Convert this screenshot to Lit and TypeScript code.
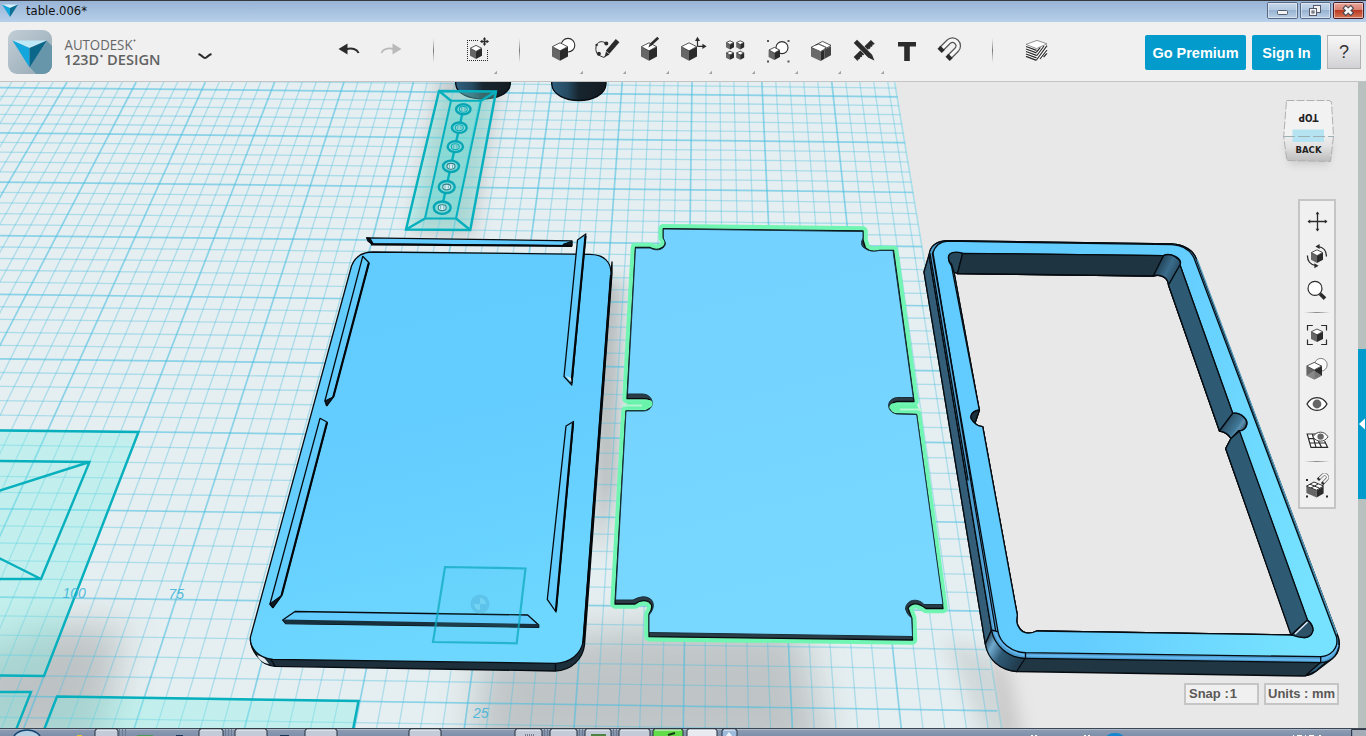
import { LitElement, html, svg, css } from "lit";
import { customElement, property } from "lit/decorators.js";

const DARK = "#2b2b2b";

/** Isometric box glyph: x/y is the top-left of its bounding box. */
const cube = (x: number, y: number, w: number, h: number) => {
  const m = x + w / 2, r = x + w, a = y + h * 0.23, b = y + h * 0.46, c = y + h * 0.77, d = y + h;
  return svg`
    <path d="M${x} ${a}L${m} ${b}V${d}L${x} ${c}Z" fill="#666"/>
    <path d="M${r} ${a}L${m} ${b}V${d}L${r} ${c}Z" fill="${DARK}"/>
    <path d="M${x + 0.4} ${a}L${m} ${y + 0.4}L${r - 0.4} ${a}L${m} ${b}Z" fill="#fff" stroke="${DARK}" stroke-width=".8" stroke-linejoin="round"/>`;
};

const arrows4 = (cx: number, cy: number, r: number, s: number) => svg`
  <path d="M${cx - r} ${cy}H${cx + r}M${cx} ${cy - r}V${cy + r}" stroke="${DARK}" stroke-width="1.3"/>
  <path fill="${DARK}" d="M${cx} ${cy - r - 1}l${s} ${s + 0.8}h${-2 * s}zM${cx} ${cy + r + 1}l${s} ${-s - 0.8}h${-2 * s}zM${cx - r - 1} ${cy}l${s + 0.8} ${s}v${-2 * s}zM${cx + r + 1} ${cy}l${-s - 0.8} ${s}v${-2 * s}z"/>`;

const magnet = (t: string) => svg`<g transform="${t}" fill="none">
  <path d="M5 13L12.5 5.5A5.6 5.6 0 0 1 20.5 13.5L13 21" stroke="#555" stroke-width="5.8"/>
  <path d="M5 13L12.5 5.5A5.6 5.6 0 0 1 20.5 13.5L13 21" stroke="#f6f6f6" stroke-width="3.4"/>
  <path d="M3.6 14.4L6.6 11.4M11.6 22.4L14.6 19.4" stroke="${DARK}" stroke-width="6"/></g>`;

const glyphs: Record<string, unknown> = {
  undo: svg`<path d="M11.5 27L20.5 21.6V32.4Z" fill="${DARK}"/><path d="M19 27.2C25 25.4 30 27 31.6 31" fill="none" stroke="${DARK}" stroke-width="2"/>`,
  redo: svg`<path d="M31.5 27L22.5 21.6V32.4Z" fill="#b9b9b9"/><path d="M24 27.2C18 25.4 13 27 11.4 31" fill="none" stroke="#b9b9b9" stroke-width="1.8"/>`,
  insert: svg`<path d="M11 18.500H23M11 38.500H32M11.500 20V38M31.500 28V38" fill="none" stroke="${DARK}" stroke-width="1" stroke-dasharray="1 1"/>${cube(14, 23, 12, 14)}${arrows4(28.5, 19.5, 3.6, 1.7)}`,
  primitives: svg`<circle cx="26" cy="23.200" r="6.800" fill="#fff" stroke="${DARK}" stroke-width="1.100"/>${cube(10, 20.4, 16, 18.4)}`,
  sketch: svg`<path d="M21.500 21.500C13.500 16 8.500 24 12 31.600C14 33.600 17.500 35 19 35.400L21.500 33" fill="none" stroke="${DARK}" stroke-width="1"/>
    <circle cx="21.300" cy="21.400" r="2" fill="${DARK}"/><circle cx="13.900" cy="31.800" r="2" fill="${DARK}"/><circle cx="11.600" cy="23" r="1.200" fill="${DARK}"/>
    <path d="M19.500 35.200L21 29.400L24.500 32.600Z" fill="${DARK}"/><path d="M22.600 30.200L32.600 18.600" stroke="${DARK}" stroke-width="4.800"/>`,
  construct: svg`${cube(13, 20.4, 16, 18.4)}<path d="M20.400 25.400L21.800 21.800L23.600 23.400Z" fill="${DARK}"/><path d="M22.600 22.800L30.200 15.800" stroke="${DARK}" stroke-width="2.600"/>`,
  modify: svg`${cube(10, 20.4, 16, 18.4)}<path d="M26.500 24.500V18M26.500 24.300H33" fill="none" stroke="${DARK}" stroke-width="1.200"/><path d="M26.500 14.800L29 19H24ZM35.600 24.300L31.400 21.700V26.900Z" fill="${DARK}"/>`,
  pattern: svg`${cube(12, 18.4, 8, 9)}${cube(22.2, 18.4, 8, 9)}${cube(12, 28.8, 8, 9)}${cube(22.2, 28.8, 8, 9)}`,
  grouping: svg`<circle cx="25" cy="25.600" r="6" fill="#fff" stroke="${DARK}" stroke-width="1.100"/>${cube(11.6, 25, 11.4, 13)}
    <path fill="#555" d="M10 18h2v2h-2zM30.500 18h2v2h-2zM10 38.400h2v2h-2zM30.500 38.400h2v2h-2z"/>`,
  combine: svg`<path d="M11 25.600L20.600 30V39L11 34.600Z" fill="#6a6a6a"/><path d="M20.600 30L24.600 27.600V36.800L20.600 39Z" fill="${DARK}"/><path d="M24.600 27.600L31 24.200V33.200L24.600 36.800Z" fill="#444"/>
    <path d="M11 25.400L22.500 19.400L31 23.400L20.600 29.600Z" fill="#fff" stroke="${DARK}" stroke-width=".8"/><path d="M15.500 23.200L18.500 22L26 25.400L24.600 27.200" stroke="${DARK}" stroke-width=".8" fill="none"/><path d="M18.500 21.800L26.500 25.400" stroke="#666" stroke-width=".8"/>`,
  measure: svg`<path d="M12.600 37L29.800 19.800" stroke="${DARK}" stroke-width="5.400"/><path d="M15 38.600L31.800 21.600" stroke="#f0f0f0" stroke-width="1.400" stroke-dasharray="1.200 1.800"/>
    <path d="M13.500 20.500L26 33" stroke="#f0f0f0" stroke-width="5.800"/><path d="M12.400 19.400L27 34" stroke="${DARK}" stroke-width="4.600"/><path d="M25 35.600L28.800 32L31.400 38.400Z" fill="${DARK}"/>`,
  text: svg`<path d="M12 20H30V24.600H23.800V39H18.200V24.600H12Z" fill="${DARK}"/>`,
  magnet: magnet("translate(7 14.4)"),
  material: svg`<path d="M11 23L21.500 26.800V38.800L11 34Z" fill="#fff"/><path d="M21.500 26.800L32 22.600V33L21.500 38.800Z" fill="#fff"/>
    <path d="M11 24.500L21.500 28.400M11 27L21.500 30.900M11 29.500L21.500 33.400M11 32L21.500 35.900M11 34.400L21.500 38.400" stroke="${DARK}" stroke-width="1.300"/>
    <path d="M21.500 30L25.400 25.400M21.500 34L29 24M21.500 38L32 23.600M25 37L32 28M28.600 35L32 31.400" stroke="${DARK}" stroke-width="1.200"/>
    <path d="M11 22.400L22 18.400L32 21.800L21.500 26.600Z" fill="#fff" stroke="#777" stroke-width=".8"/>`,
};

const navGlyphs: Record<string, unknown> = {
  pan: arrows4(17.5, 17.5, 9, 1.9),
  orbit: svg`${cube(11, 10.4, 12, 13.6)}<path d="M18 7.600C23.400 8 26.600 12 26.400 17.600M16 26.600C10.600 26 7.400 22 7.400 16.400" fill="none" stroke="${DARK}" stroke-width="1.300"/>
    <path d="M15.400 7.400L19.600 5V10ZM18.600 26.800L14.400 24.200V29.200Z" fill="${DARK}"/>`,
  zoom: svg`<circle cx="15" cy="15.400" r="7" fill="#fff" stroke="${DARK}" stroke-width="1.200"/><path d="M20 20.800L25 25.600" stroke="${DARK}" stroke-width="3.600"/>`,
  fit: svg`${cube(11, 10.6, 12, 13.4)}<path d="M7.500 12.400V7.500H12.800M21.200 7.500H26.500V12.400M7.500 21.600V26.500H12.800M21.200 26.500H26.500V21.600" fill="none" stroke="${DARK}" stroke-width="1.200"/>`,
  shading: svg`<circle cx="20.800" cy="12.800" r="6.400" fill="#fafafa" stroke="#666" stroke-width=".8"/>${cube(6.4, 10, 15.6, 17.4)}
    <path d="M6.400 23.400L14.200 18.600L22 23.400L14.200 27.400Z" fill="#999" opacity=".7"/>`,
  eye: svg`<path d="M7 17C11.500 8.400 22.500 8.400 27 17C22.500 25.600 11.500 25.600 7 17Z" fill="#fff" stroke="${DARK}" stroke-width="1.300"/><circle cx="17" cy="17" r="4.400" fill="#666"/>`,
  gridEye: svg`<path d="M7.400 12H24.600L27.400 25.400H11Z" fill="#fff"/><path d="M18 12H7.200L11 25.400H27.600L24.600 19M8.600 16.600H15M9.800 21H26M12.400 12L16 25.400M18.400 19L21.600 25.400" fill="none" stroke="${DARK}" stroke-width="1.200"/>
    <path d="M13 14.800C16.500 8.600 24.500 8.600 28 14.800C24.500 20.600 16.500 20.600 13 14.800Z" fill="#fff" stroke="#444" stroke-width="1"/><circle cx="20.600" cy="14.600" r="3.200" fill="#666"/>`,
  snap: svg`<path d="M6.400 17.600L16.600 21.400V28.600L6.400 24Z" fill="#666"/><path d="M16.600 21.400L23.600 17.400V24.400L16.600 28.600Z" fill="${DARK}"/>
    <path d="M6.400 17.200L14 13L23.600 17L16.600 21.200Z" fill="#fff" stroke="${DARK}" stroke-width="1"/><path d="M10 15.200L19.600 19.200M11 19L18 15" stroke="${DARK}" stroke-width="1"/>
    ${magnet("translate(16 3.4) scale(.52)")}<path fill="${DARK}" d="M6 10h2v2H6zM6 26.400h2v2H6zM26 26.400h2v2h-2z"/>`,
};

const SLOTS = ["undo", "redo", "|", "insert*", "|", "primitives*", "sketch*", "construct*", "modify*", "pattern*", "grouping*", "combine*", "measure*", "text", "magnet", "|", "material"];

@customElement("tool-slot")
class ToolSlot extends LitElement {
  @property() name = "";
  static styles = css`
    :host { display: block; width: 43px; height: 59px; }
    svg { display: block; }
  `;
  render() {
    if (this.name === "|")
      return html`<svg width="43" height="59"><defs><linearGradient id="s" x1="0" x2="0" y1="0" y2="1"><stop offset="0" stop-color="#999" stop-opacity="0"/><stop offset=".5" stop-color="#777"/><stop offset="1" stop-color="#999" stop-opacity="0"/></linearGradient></defs><rect x="20" y="16" width="1" height="25" fill="url(#s)"/></svg>`;
    const menu = this.name.endsWith("*");
    return html`<svg width="43" height="59">${glyphs[this.name.replace("*", "")]}
      ${menu ? svg`<path d="M41 48.800V52H37.800Z" fill="#a2a2a2"/>` : ""}</svg>`;
  }
}

@customElement("nav-bar")
class NavBar extends LitElement {
  static styles = css`
    :host { display: flex; flex-direction: column; box-sizing: border-box; width: 38px; height: 310px; padding: 3px 0; background: #f0f0f0; border: 2px solid #c5c5c5; }
    svg { display: block; flex: none; }
    .rule { height: 1px; margin: 4px 4px 5px; background: linear-gradient(90deg, transparent, #888, transparent); flex: none; }
    .last { margin-top: 2px; }
  `;
  private icon(n: string, c = "", h = 34.5) {
    return html`<svg class=${c} width="34" height=${h} viewBox="0 0 34 ${h}">${navGlyphs[n]}</svg>`;
  }
  render() {
    return html`${["pan", "orbit", "zoom"].map((n) => this.icon(n))}
      <div class="rule"></div>
      ${["fit", "shading", "eye", "gridEye"].map((n) => this.icon(n, "", 34.9))}
      <div class="rule"></div>${this.icon("snap", "last")}`;
  }
}

/* ---- workplane grid in perspective ---- */
const TOP = 82, BOTTOM = 728, EDGE = 2.91;
const columnTop = (k: number) => 692 + 69.8 * k + 0.04 * k * k;
const columnBottom = (k: number) => 683.3 + 109.2 * k - 0.12 * k * k;
const rowY = (j: number) => -1011.7 + 27767 / (25.26 - j);

const gridLines = () => {
  const out: unknown[] = [];
  for (let i = -70; i <= 14; i++) {
    const k = i / 5, major = i % 5 === 0;
    out.push(svg`<line class=${major ? "major" : "minor"} x1=${columnTop(k)} y1=${TOP} x2=${columnBottom(k)} y2=${BOTTOM}></line>`);
  }
  for (let i = -2; i <= 51; i++) {
    const j = i / 5, y = rowY(j), major = i % 5 === 0;
    out.push(svg`<line class=${major ? "major" : "minor"} x1="0" y1=${y} x2="1010" y2=${y + 1010 * (0.0103 + 0.0005 * j)}></line>`);
  }
  return out;
};

const RINGS = [[463.3, 109.3, 7.2, 5], [459.3, 127.7, 7.4, 5.2], [455.3, 146.7, 7.6, 5.4], [451, 166.3, 8, 5.7], [446.7, 187, 8, 6], [442.2, 207.7, 8.4, 6.2]];

/* Visible opening of the frame, and the outline of the notched plate. */
const OPENING = "M957.500 273.500L1153.500 276C1162 274 1168 278 1168.500 285L1219.500 431Q1227 432 1231 438.500L1225.700 448.500L1291.500 635L1036.700 631C1031 634 1024 634 1020 629C1016 624 1016.500 620 1017.300 615L982.700 426.700Q977 426 975 423L979.300 410L954 272Z";
const PLATE = "M663.300 228.700L863 231V240L865.500 248Q871 253 879 250.500H893.500L914 401.500H897C887 403 888 414 897 414L916.500 414.500L943 608.500H926Q914 599.500 908 608L911.700 618L912.500 640L649 636.700V614Q654.500 606 649 602Q642 598.500 635 604H615L626 411H645C654 408 654 399 645 398.700H627L635.500 247.500H650C658 252 667 247 665 240L663.300 238Z";

@customElement("model-scene")
class ModelScene extends LitElement {
  static styles = css`
    :host { display: block; }
    svg { display: block; }
    .major { stroke: #49bde0; stroke-opacity: .58; stroke-width: 1.7; }
    .minor { stroke: #49bde0; stroke-opacity: .37; stroke-width: 1.3; }
    .sketch { fill: rgba(125, 243, 232, .33); stroke: #08b0be; stroke-width: 2.4; }
    .wire { fill: none; stroke: #08b0be; stroke-width: 2.4; }
    .e { stroke: #050b10; stroke-width: 1.3; stroke-linejoin: round; }
    .line { fill: none; stroke: #050b10; stroke-width: 1.3; stroke-linecap: round; }
    .axis { font: italic 14px "Liberation Sans", sans-serif; fill: #3fb5d8; fill-opacity: .9; }
  `;
  render() {
    return html`<svg width="1358" height="646" viewBox="0 82 1358 646">
      <defs>
        <clipPath id="plane"><path d="M0 82H${columnTop(EDGE)}L${columnBottom(EDGE)} 728H0Z"/></clipPath>
        <filter id="b1" x="-50%" y="-50%" width="200%" height="200%"><feGaussianBlur stdDeviation="19"/></filter>
        <filter id="b2" x="-50%" y="-50%" width="200%" height="200%"><feGaussianBlur stdDeviation="9"/></filter>
        <linearGradient id="cyl"><stop offset="0" stop-color="#30607f"/><stop offset=".3" stop-color="#254a61"/><stop offset=".5" stop-color="#17252f"/><stop offset="1" stop-color="#141b21"/></linearGradient>
        <linearGradient id="p1" x1="0" y1="0" x2=".2" y2="1"><stop offset="0" stop-color="#62cbff"/><stop offset=".6" stop-color="#65ceff"/><stop offset="1" stop-color="#6dd7ff"/></linearGradient>
        <linearGradient id="p2" x1="0" y1="0" x2=".2" y2="1"><stop offset="0" stop-color="#72d1ff"/><stop offset="1" stop-color="#79d8ff"/></linearGradient>
        <linearGradient id="fr" gradientUnits="userSpaceOnUse" x1="930" y1="400" x2="1330" y2="500"><stop offset="0" stop-color="#62cbff"/><stop offset=".5" stop-color="#64cdff"/><stop offset="1" stop-color="#76e2ff"/></linearGradient>
        <linearGradient id="co" gradientUnits="userSpaceOnUse" x1="985" y1="640" x2="1022" y2="660"><stop offset="0" stop-color="#29465a"/><stop offset=".22" stop-color="#6fa9cd"/><stop offset=".5" stop-color="#2f5a75"/><stop offset="1" stop-color="#203a4b"/></linearGradient>
        <linearGradient id="nt" gradientUnits="userSpaceOnUse" x1="1224" y1="424" x2="1242" y2="436"><stop offset="0" stop-color="#2c5168"/><stop offset=".55" stop-color="#3f7797"/><stop offset=".68" stop-color="#5b91b0"/><stop offset="1" stop-color="#213e50"/></linearGradient>
        <linearGradient id="nc" gradientUnits="userSpaceOnUse" x1="1158" y1="262" x2="1180" y2="273"><stop offset="0" stop-color="#1f3c4f"/><stop offset=".5" stop-color="#3a6c8b"/><stop offset="1" stop-color="#254458"/></linearGradient>
      </defs>
      <rect y="82" width="1358" height="646" fill="#e8e8e8"/>
      <path d="M985 650L1008 670L1024 745L995 740Z" fill="#999" opacity=".4" filter="url(#b2)"/>
      <g clip-path="url(#plane)">
        <rect y="82" width="1010" height="646" fill="#e5eef0"/>
        <path d="M440 75H500L472 236L412 232Z" fill="#777" opacity=".32" filter="url(#b2)"/>
        <path d="M590 280H622L618 480L598 560Z" fill="#888" opacity=".5" filter="url(#b2)"/>
        <path d="M40 625H122L105 750H-40V660Z" fill="#888" opacity=".42" filter="url(#b1)"/>
        <path d="M485 645L650 625H800L830 760H470Z" fill="#888" opacity=".4" filter="url(#b1)"/>
        <path d="M945 640L1000 655L1030 740H985Z" fill="#999" opacity=".26" filter="url(#b2)"/>
        ${gridLines()}
      </g>
      <path d="M894.600 82L1001.700 728" stroke="#76cfe6" stroke-opacity=".5" stroke-width="1.600"/>

      <path d="M455.700 80V84C457 104 509 104 510.300 84V80Z" fill="url(#cyl)" class="e"/>
      <path d="M551.700 80V84C553 106 605 106 606 84V80Z" fill="url(#cyl)" class="e"/>

      <path class="sketch" d="M439 91L496 91.500L470.300 230L406 229.500Z"/>
      <path d="M451 100.700H481L456 218.500H425Z" fill="rgba(100,222,214,.45)" stroke="#08b0be" stroke-width="2"/>
      <path class="wire" d="M439 91L451 100.700M496 91.500L481 100.700M470.300 230L456 218.500M406 229.500L425 218.500M463.300 109L442 207"/>
      ${RINGS.map(([x, y, a, b], i) => svg`<ellipse cx=${x} cy=${y} rx=${a} ry=${b} fill="#84dcd9" stroke="#08a5b4" stroke-width="2.400"/>
        <ellipse cx=${x} cy=${y} rx="4" ry="2.900" fill=${i > 2 ? "#d8eef0" : "#8fd7d6"} stroke=${i > 2 ? "#357f8b" : "#11acb9"} stroke-width="1.100"/><path d="M${x - 1.6} ${y - 1.6}v3.200M${x + 1.6} ${y - 1.6}v3.200" stroke="#39aab4" stroke-width=".8"/>`)}

      <path class="sketch" d="M-5 430.500L138.500 432L44 676L-5 675.500Z"/>
      <path class="wire" d="M-5 461L89.500 462L41 579H-5M89.500 462L-5 492M41 579L-5 556"/>
      <path class="sketch" d="M-5 692H31L12 740H-5Z"/>
      <path class="sketch" d="M57 696.500L358.500 701L351 740H40Z"/>
      <text class="axis" x="62.500" y="597.500">100</text><text class="axis" x="168.500" y="598.500">75</text>
      <text class="axis" x="473" y="718">25</text>

      <path d="M250.400 640C251 650 256 655 259 658C263 664 268 666 275 666.300L555 671C572 671 583 658 584.500 645L612 273V262L580 640L555 660Z" fill="#1c2f3b" class="e"/>
      <path d="M257 655L264 657.500L269 664C263 663 259 660 257 655Z" fill="#dfe9ee"/>
      <path d="M373 252L590 254.300C604 254.500 611 262 611 273L583.200 641C581 654 570 663 555 663.300L273 659.300C258 658 250 648 250.300 637.500L351.500 266C355 257 362 252 373 252Z" fill="url(#p1)" class="e"/>
      <path class="line" d="M271 659.500L275 666M555.500 664V670.500"/>
      <g class="e" fill="#63ccff">
        <path d="M366.700 237.800L572 240.800V245.800L371.500 243.800L368 241Z"/>
        <path d="M362.700 256.300L369 262.700L333.300 396.700L326.500 405.500L325 400.500Z"/>
        <path d="M320 418.300L327.300 422.300L281.700 595L272.700 607.500L270 604Z"/>
        <path d="M295 611.500L527.700 615L538.700 625V627.300L286 623.700L282.700 620Z"/>
        <path d="M566 426L573.500 421.500L556 612L547.300 599.300Z"/>
        <path d="M577.500 240L585.800 234L571.800 385L564 376.500Z"/>
      </g>
      <path d="M283 619.500L538.500 624V627.500L286 623.700Z" fill="#17303e"/>
      <path d="M325 401L333.300 397L327 405.500ZM270 604L281.700 595.500L273 607.500ZM564 244L571.500 241.500V245.500L563 245.300ZM367 238L371.500 243.500L373 243.500L370 238.500Z" fill="#101d26" class="e"/>
      <path d="M371 244.300L572 246M368.800 263L333.300 397M327 422.500L281.700 595M573 423L555.900 611M585.500 236L571.500 383M611 275L583.300 643" fill="none" stroke="#03070a" stroke-width="2.200"/>
      <path d="M566 376L571.500 382L571 378Z" fill="#dceaf0"/>

      <g opacity=".72"><path d="M445 567L525.500 568.500L516.700 643.300L433 642Z" fill="rgba(70,200,222,.12)" stroke="#0ba9bd" stroke-width="2.200"/></g>
      <circle cx="480" cy="604" r="9.500" fill="#59bae0" opacity=".65"/><path d="M480 604V598A6 6 0 0 1 486 604ZM480 604V610A6 6 0 0 1 474 604Z" fill="#72d3f3"/>

      <path d=${PLATE} fill="#24323b" stroke="#70f5b2" stroke-width="9.500" stroke-linejoin="round"/>
      <path d=${PLATE} fill="#2b3c47" class="e"/>
      <path d="M663.300 229L863 231.500L863 238Q860 244 863 247Q870 253 879 250.500H893L913.300 397.500H899C886 397 885 412 897 414L916.700 414.500L943 604.500H924C917 597 906 600 905.500 609Q907 615 911.700 618L912.500 636.500L649 632.500V615C655 608 654 602 650.500 599Q644 594 633 600H615.500L626 411H643C656 411 655 394 642 394H627.500L635.500 248H650C658 252 665 249 665.500 243L663.300 238Z" fill="url(#p2)" stroke="#17303a" stroke-width="1"/>
      <path d="M630 405H645Q649 405 649 403.500M893 407Q895 408.500 899 408.500H915" fill="none" stroke="#69f3aa" stroke-width="7" stroke-linecap="round"/>
      <path d="M622 405.500H642M900 409.500H922" stroke="#b4f5d3" stroke-width="1.800"/>

      <path fill-rule="evenodd" d="M924 272L930 252C932 245 938 241 948 240.700L1172 244C1184 245 1192 250 1195.500 257L1338.500 638C1341 648 1337 655 1332 659L1315 672Q1310 676 1303 676L1016.700 671.500C1000 670 988 658 985.300 644Z${OPENING}" fill="#213643" class="e"/>
      <path d="M924 272L929 255L991.500 630L985.300 644Z" fill="#345d77" class="e"/>
      <path d="M985.300 644L991.500 630C996 645 1008 656 1025 658.500L1016.700 671.500C1000 670 988 660 985.300 644Z" fill="url(#co)" class="e"/>
      <path d="M1320.500 662.500L1337 653L1316 671L1305 676Z" fill="#32637f" class="e"/>
      <path fill-rule="evenodd" d="M929 255C930 246 937 241 948 240.700L1172 244C1184 245 1192 250 1195.500 257L1338.500 638C1341 654 1332 662 1320.500 662.600L1025.500 658.300C1008 658 994 645 991.500 630Z${OPENING}" fill="#4f9fd0" class="e"/>
      <path d="M936 258L995 632Q1001 650 1025 655.500L1320 660Q1334 657 1338 645" fill="none" stroke="#65b8f1" stroke-width="1.800"/>
      <path fill-rule="evenodd" d="M932.500 254C935 245 940 241.500 948 241.200L1172 244.600C1182 245 1190 250 1194 258L1336.500 637C1339 649 1330 656 1320.700 656.700L1025.700 652.700C1010 652 1000 642 998 631.500ZM948.500 258C948 253 955 251.500 962.700 253.300L1163 255.700C1170 252 1183 258 1180 265L1232.700 413.300C1240 412 1250 419 1246 427Q1243 431 1239 430.700L1307.300 620Q1313 624 1313 630C1312 637 1305 639 1300 636.500L1291.700 635L1036.700 631C1031 634 1024 634 1020 629C1016 624 1016.500 620 1017.300 615L982.700 426.700Q975 426 971 418Q971 411 979.300 410L951.500 266Q948.500 262 948.500 258Z" fill="url(#fr)" class="e"/>
      <path d="M948.500 258C948 252 955 251 962.700 253.300L957.500 273.500L954 272L951.500 264Q948.500 262 948.500 258Z" fill="#27485b" class="e"/>
      <path d="M962.700 253.300L1163.500 255.700L1153.500 276L957.500 273.500Z" fill="#1e3441" class="e"/>
      <path d="M1163.500 255.700C1172 252 1182 260 1180 265L1168.500 285C1168 278 1162 274 1153.500 275.500Z" fill="url(#nc)" class="e"/>
      <path d="M1180 265L1232.700 413.300L1219.500 431L1168.500 285Z" fill="#2e5a73" class="e"/>
      <path d="M1232.700 413.300C1240 412 1250 420 1245.500 427Q1243 431 1238.500 430.700L1231 438.500Q1227 432 1219.500 431Z" fill="url(#nt)" class="e"/>
      <path d="M1239.500 431L1307.500 620L1291 635L1225.700 448.500L1231 438.500Z" fill="#2e5a73" class="e"/>
      <path d="M1307.500 620Q1313 625 1313 630C1312 637 1305 640 1292 635Z" fill="#2d5267" class="e"/><path d="M1307.500 622L1295 634" stroke="#d8eafa" stroke-width="1.600"/>
      <path d="M979.500 410L975 423Q970 419 971 416Q972 411 979.500 410Z" fill="#1b303d" class="e"/>
      <path class="line" d="M933 253L995.500 630M930 253.500L968 480M991.500 630L997.500 631.500M1025.500 653L1025.500 658.500M1320.700 657V662.500"/>
      <path d="M1197 259L1337 634" stroke="#579fc0" stroke-width="1.300"/>
    </svg>`;
  }
}

@customElement("view-cube")
class ViewCube extends LitElement {
  static styles = css`
    :host { display: block; } svg { display: block; overflow: visible; }
    text { font: bold 10px "DejaVu Sans", sans-serif; fill: #222; text-anchor: middle; }
    .back { font-size: 8px; }
  `;
  render() {
    return html`<svg width="52" height="64" viewBox="0 0 52 64">
      <defs><linearGradient id="g" x1="0" x2="0" y1="0" y2="1"><stop offset="0" stop-color="#ededed"/><stop offset=".4" stop-color="#e2e2e2"/><stop offset="1" stop-color="#bcbcbc"/></linearGradient>
      <filter id="f" x="-30%" y="-30%" width="160%" height="190%"><feGaussianBlur stdDeviation="4"/></filter></defs>
      <path d="M3 44H49L45 65H7Z" fill="#999" opacity=".4" filter="url(#f)"/>
      <path d="M3.500 1.500H46L48.500 3L50.500 37.500H.7Z" fill="#f2f2f2"/><path d="M.7 37.500H50.500L47.500 62.500L4 61.500Z" fill="url(#g)"/>
      <path d="M3.500 1.500H46L48.500 3L50.500 37.500L47.500 62.500L4 61.500L.7 37.500Z" fill="none" stroke="#b0b0b0" stroke-width="1" stroke-dasharray="8 2"/>
      <rect x="9.500" y="30.500" width="31.500" height="12.500" fill="#b5e3f1"/><path d="M0 37.500H51" stroke="#9fb0b5" stroke-width="1" stroke-dasharray="12 3"/>
      <text transform="translate(25.500 15) rotate(180)" textLength="20" lengthAdjust="spacingAndGlyphs">TOP</text>
      <text class="back" x="25.500" y="53.500" textLength="26" lengthAdjust="spacingAndGlyphs">BACK</text>
    </svg>`;
  }
}

const TASKS: [number, number, string][] = [[95, 23, ""], [199, 24, ""], [235, 32, ""], [305, 32, ""], [409, 32, ""], [515, 27, ""], [550, 27, ""], [585, 26, ""], [619, 31, ""], [653, 30, "green"], [687, 30, "white"], [722, 15, "blue"]];

@customElement("task-bar")
class TaskBar extends LitElement {
  static styles = css`:host, svg { display: block; }`;
  render() {
    const fills: Record<string, string> = { "": "#c3cbd8", green: "#62dc49", white: "#e7eaf0", blue: "#9fbbdc" };
    return html`<svg width="1366" height="8"><defs><linearGradient id="t" x1="0" x2="0" y1="0" y2="1"><stop offset="0" stop-color="#929fb4"/><stop offset="1" stop-color="#7d8faa"/></linearGradient></defs>
      <rect width="1366" height="8" fill="url(#t)"/><rect width="1366" height="1" fill="#3c4654"/><rect y="1" width="1366" height="1" fill="#a9b9ca"/>
      <ellipse cx="27" cy="12" rx="14" ry="10" fill="#b5cfe2" stroke="#164571" stroke-width="1.500"/>
      ${TASKS.map(([x, w, c]) => svg`<rect x=${x} y="1" width=${w} height="12" rx="2" fill=${fills[c]} stroke="#26303d" stroke-width="1"/><path d="M${x + 2} 2H${x + w - 2}" stroke="#f4f7fa"/>`)}
      <path d="M119.500 1V8M122.500 1V8M125.500 1V8M225.500 1V8M228.500 1V8M231.500 1V8M544.500 1V8M547.500 1V8M579.500 1V8M582.500 1V8M613.500 1V8M616.500 1V8" stroke="#6c7b92"/>
      <path d="M137 7.500H153" stroke="#4d9a58"/><path d="M77 7.500H82" stroke="#ddc62c"/><path d="M176 7.500H183M280 7.500H289" stroke="#1a3557"/><path d="M591 7H606" stroke="#4e8543" stroke-width="2"/><path d="M668 7L675 5" stroke="#163b14" stroke-width="2"/>
      <path d="M525 7H534" stroke="#778" stroke-dasharray="1 1" stroke-width="2"/><path d="M729 4L732 8H726Z" fill="#edf5ff"/>
      <path d="M1031 7.500h2M1035 7.500h2M1084 7.500h2M1088 7.500h2M1293 7.500h1M1297 7.500h5M1305 7.500h1M1309 7.500h5M1319 7.500h2" stroke="#fff"/>
      <ellipse cx="1115" cy="10" rx="9" ry="5" fill="#1687cf"/><path d="M1351.500 8V1.500H1366" fill="none" stroke="#303945"/><rect x="1353" y="2" width="13" height="6" fill="#a4acb7"/></svg>`;
  }
}

@customElement("app-root")
class AppRoot extends LitElement {
  static styles = css`
    :host { display: flex; flex-direction: column; width: 1366px; height: 736px; overflow: hidden; font-family: "Liberation Sans", Arial, sans-serif; background: #e8e8e8; }
    .title { display: flex; align-items: center; box-sizing: border-box; height: 22px; padding: 0 2px 2px 1px; border-top: 1px solid #36383e; background: linear-gradient(#98b4d6, #b7d0ea); flex: none; }
    .title svg { display: block; }
    .caption { width: 70px; }
    .windows { display: flex; gap: 2px; margin-left: auto; }
    .bar { display: flex; box-sizing: border-box; height: 60px; background: #f0f0f0; border-bottom: 1px solid #c3c3c3; flex: none; }
    .brand { width: 327px; flex: none; }
    .actions { display: flex; gap: 6px; margin: 13px 5px 0 auto; }
    .btn { display: flex; align-items: center; justify-content: center; height: 35px; border-radius: 2px; background: #029bcb; color: #fff; font-weight: bold; font-size: 14.5px; }
    .premium { width: 101px; } .sign { width: 69px; }
    .help { display: flex; align-items: center; justify-content: center; box-sizing: border-box; width: 34px; height: 34px; border: 1px solid #b1b1b1; background: linear-gradient(#f7f7f7, #d2d2d6); color: #333; font-size: 18px; }
    .view { display: flex; position: relative; height: 646px; flex: none; }
    .rail { width: 8px; background: #b8c1bf; padding-top: 267px; box-sizing: border-box; }
    .tab { height: 150px; background: #029bcb; display: flex; align-items: center; }
    .tab svg { display: block; }
    view-cube { position: absolute; left: 1283px; top: 17px; }
    nav-bar { position: absolute; left: 1298px; top: 117px; }
    .status { position: absolute; right: 27px; bottom: 23px; display: flex; gap: 5px; }
    .field { box-sizing: border-box; width: 75px; height: 22px; padding-left: 3px; border: 2px solid #c5c5c5; background: #f0f0f0; color: #5c5856; font: bold 13px/18px "Liberation Sans", Arial, sans-serif; white-space: pre; }
    .units { padding-left: 2px; }
    .value { margin-left: 1px; }
  `;
  private windowButton(w: number, kind: "min" | "max" | "close") {
    const close = kind === "close";
    return html`<svg width=${w} height="17"><defs><linearGradient id=${kind} x1="0" x2="0" y1="0" y2="1">
      ${close ? svg`<stop offset="0" stop-color="#eaa99c"/><stop offset=".48" stop-color="#d9806f"/><stop offset=".5" stop-color="#b93a22"/><stop offset="1" stop-color="#d87a5a"/>` : svg`<stop offset="0" stop-color="#c6d7ea"/><stop offset=".48" stop-color="#b1c7e0"/><stop offset=".5" stop-color="#98b3d1"/><stop offset="1" stop-color="#bcd1e8"/>`}</linearGradient></defs>
      <rect x=".5" y=".5" width=${w - 1} height="16" rx="1.500" fill="url(#${kind})" stroke=${close ? "#481c28" : "#566884"}/><rect x="1.500" y="1.500" width=${w - 3} height="14" fill="none" stroke="#fff" stroke-opacity=".45"/>
      ${kind === "min" ? svg`<rect x="10.500" y="8.500" width="10" height="4" rx="1" fill="#f3f3f3" stroke="#535b6d"/>` : kind === "max" ? svg`<g fill="#f3f3f3" stroke="#535b6d"><rect x="13.500" y="3.500" width="7" height="7"/><rect x="9.500" y="6.500" width="7" height="7"/><rect x="12" y="9" width="2" height="2"/></g>` : svg`<path d="M11 4.500L19.500 12.500M19.500 4.500L11 12.500" stroke="#484552" stroke-width="4.800"/><path d="M11.800 5.200L18.700 11.800M18.700 5.200L11.800 11.800" stroke="#f5f5f5" stroke-width="2.800"/>`}</svg>`;
  }
  render() {
    return html`
      <div class="title">
        <svg width="24" height="19"><path d="M1 3.500H17L9 7Z" fill="#d5f1fb"/><path d="M1 3.500L9 7V16Z" fill="#14a5da"/><path d="M17 3.500L9 7V16Z" fill="#0b6e93"/></svg>
        <svg class="caption" height="19"><text x="1" y="14" font-family="'DejaVu Sans Condensed','DejaVu Sans',sans-serif" font-size="12.500" fill="#101010" textLength="61" lengthAdjust="spacingAndGlyphs">table.006*</text></svg>
        <div class="windows">${this.windowButton(31, "min")}${this.windowButton(31, "max")}${this.windowButton(31, "close")}</div>
      </div>
      <div class="bar">
        <svg class="brand" height="59">
          <defs><linearGradient id="lg" x1="0" y1="0" x2="1" y2="1"><stop offset="0" stop-color="#c2ced6"/><stop offset="1" stop-color="#94a8b4"/></linearGradient><clipPath id="lc"><rect x="8" y="8" width="44" height="44" rx="9"/></clipPath></defs>
          <rect x="8" y="8" width="44" height="44" rx="9" fill="url(#lg)"/><path d="M47 19L56 28V56H40L29.500 45Z" fill="#6796aa" clip-path="url(#lc)"/>
          <path d="M12.500 18.500H47L29.500 26Z" fill="#c0e9f7"/><path d="M12.500 18.500L29.500 26V45.500Z" fill="#12a6dc"/><path d="M47 18.500L29.500 26V45.500Z" fill="#0b678a"/>
          <text x="64.500" y="28" font-family="'Open Sans','Noto Sans',sans-serif" font-size="14.800" fill="#666" textLength="68" lengthAdjust="spacingAndGlyphs">AUTODESK</text><circle cx="134.500" cy="18.500" r="1" fill="#666"/>
          <text x="64" y="43" font-family="'Open Sans','Noto Sans',sans-serif" font-weight="600" font-size="14.600" fill="#626262" textLength="35" lengthAdjust="spacingAndGlyphs">123D</text><circle cx="101.500" cy="34" r="1.200" fill="#666"/>
          <text x="107" y="43" font-family="'Open Sans','Noto Sans',sans-serif" font-weight="600" font-size="14.600" fill="#626262" textLength="53.500" lengthAdjust="spacingAndGlyphs">DESIGN</text>
          <path d="M198.500 32C202 33 203 36 205 36S208 33 211.500 32" fill="none" stroke="#2b2b2b" stroke-width="2.200"/>
        </svg>
        ${SLOTS.map((n) => html`<tool-slot .name=${n}></tool-slot>`)}
        <div class="actions"><div class="btn premium">Go Premium</div><div class="btn sign">Sign In</div><div class="help">?</div></div>
      </div>
      <div class="view">
        <model-scene></model-scene>
        <div class="rail"><div class="tab"><svg width="8" height="14"><path d="M1 7L7 1.500V12.500Z" fill="#fff"/></svg></div></div>
        <view-cube></view-cube>
        <nav-bar></nav-bar>
        <div class="status"><div class="field">Snap :<span class="value">1</span></div><div class="field units">Units : mm</div></div>
      </div>
      <task-bar></task-bar>`;
  }
}
